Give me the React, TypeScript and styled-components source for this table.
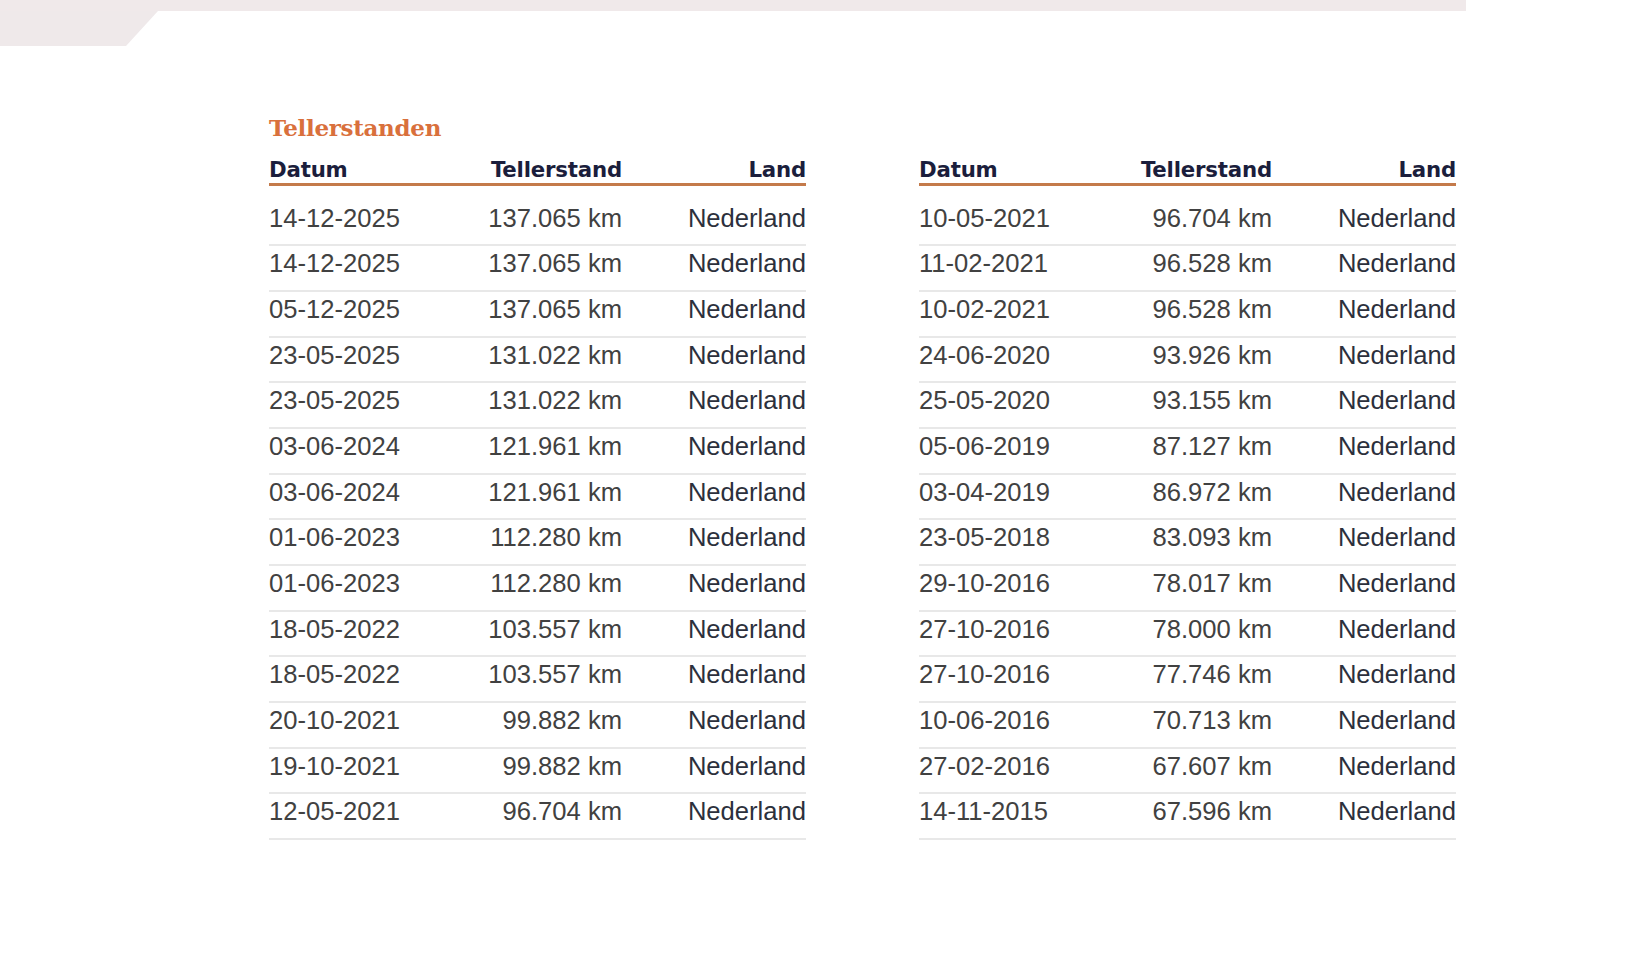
import React from "react";
import styled, { createGlobalStyle } from "styled-components";

const GlobalStyle = createGlobalStyle`
  html, body {
    margin: 0;
    padding: 0;
    background: #ffffff;
  }
  body {
    font-family: "Liberation Sans", Arial, sans-serif;
  }
`;

const Page = styled.div`
  width: 1645px;
  min-height: 960px;
  background: #ffffff;
`;

const TopBar = styled.div`
  width: 1466px;
  height: 11px;
  background: #f0e9ea;
`;

const Tab = styled.div`
  width: 158px;
  height: 35px;
  background: #efe9ea;
  clip-path: polygon(0 0, 158px 0, 126px 100%, 0 100%);
`;

const Content = styled.div`
  padding: 68px 0 0 269px;
`;

const Title = styled.h2`
  margin: 0;
  font-family: "DejaVu Serif", "Liberation Serif", serif;
  font-weight: 700;
  font-size: 23px;
  line-height: 27px;
  letter-spacing: -0.3px;
  color: #d9703c;
`;

const Tables = styled.div`
  display: flex;
  gap: 113px;
  margin-top: 15.5px;
`;

const Table = styled.div`
  width: 537px;
`;

const Columns = styled.div`
  display: grid;
  grid-template-columns: 183px 170px 184px;
  align-items: center;
`;

const HeadRow = styled(Columns)`
  border-bottom: 3px solid #c47a4a;
`;

const HeadCell = styled.div<{ $align?: "left" | "right" }>`
  font-family: "DejaVu Sans", Verdana, sans-serif;
  font-weight: 700;
  font-size: 21.3px;
  line-height: 26px;
  letter-spacing: -0.2px;
  color: #1b1e3c;
  text-align: ${(p) => p.$align ?? "left"};
`;

const Body = styled.div`
  padding-top: 15px;
`;

const Row = styled(Columns)`
  padding: 3px 0 10px;
  border-bottom: 2px solid #e8e8e8;
  height: 45.7px;
  box-sizing: border-box;
  align-items: start;
`;

const Cell = styled.div<{ $align?: "left" | "right"; $dark?: boolean }>`
  font-size: 25.6px;
  line-height: 29px;
  color: ${(p) => (p.$dark ? "#2c303c" : "#414141")};
  text-align: ${(p) => p.$align ?? "left"};
  white-space: nowrap;
`;

type Reading = { date: string; km: string };

const left: Reading[] = [
  { date: "14-12-2025", km: "137.065 km" },
  { date: "14-12-2025", km: "137.065 km" },
  { date: "05-12-2025", km: "137.065 km" },
  { date: "23-05-2025", km: "131.022 km" },
  { date: "23-05-2025", km: "131.022 km" },
  { date: "03-06-2024", km: "121.961 km" },
  { date: "03-06-2024", km: "121.961 km" },
  { date: "01-06-2023", km: "112.280 km" },
  { date: "01-06-2023", km: "112.280 km" },
  { date: "18-05-2022", km: "103.557 km" },
  { date: "18-05-2022", km: "103.557 km" },
  { date: "20-10-2021", km: "99.882 km" },
  { date: "19-10-2021", km: "99.882 km" },
  { date: "12-05-2021", km: "96.704 km" },
];

const right: Reading[] = [
  { date: "10-05-2021", km: "96.704 km" },
  { date: "11-02-2021", km: "96.528 km" },
  { date: "10-02-2021", km: "96.528 km" },
  { date: "24-06-2020", km: "93.926 km" },
  { date: "25-05-2020", km: "93.155 km" },
  { date: "05-06-2019", km: "87.127 km" },
  { date: "03-04-2019", km: "86.972 km" },
  { date: "23-05-2018", km: "83.093 km" },
  { date: "29-10-2016", km: "78.017 km" },
  { date: "27-10-2016", km: "78.000 km" },
  { date: "27-10-2016", km: "77.746 km" },
  { date: "10-06-2016", km: "70.713 km" },
  { date: "27-02-2016", km: "67.607 km" },
  { date: "14-11-2015", km: "67.596 km" },
];

const ReadingTable = ({ rows }: { rows: Reading[] }) => (
  <Table>
    <HeadRow>
      <HeadCell>Datum</HeadCell>
      <HeadCell $align="right">Tellerstand</HeadCell>
      <HeadCell $align="right">Land</HeadCell>
    </HeadRow>
    <Body>
      {rows.map((r, i) => (
        <Row key={i}>
          <Cell>{r.date}</Cell>
          <Cell $align="right">{r.km}</Cell>
          <Cell $align="right" $dark>
            Nederland
          </Cell>
        </Row>
      ))}
    </Body>
  </Table>
);

const App = () => {
  return (
    <Page>
      <GlobalStyle />
      <TopBar />
      <Tab />
      <Content>
        <Title>Tellerstanden</Title>
        <Tables>
          <ReadingTable rows={left} />
          <ReadingTable rows={right} />
        </Tables>
      </Content>
    </Page>
  );
};

export default App;
